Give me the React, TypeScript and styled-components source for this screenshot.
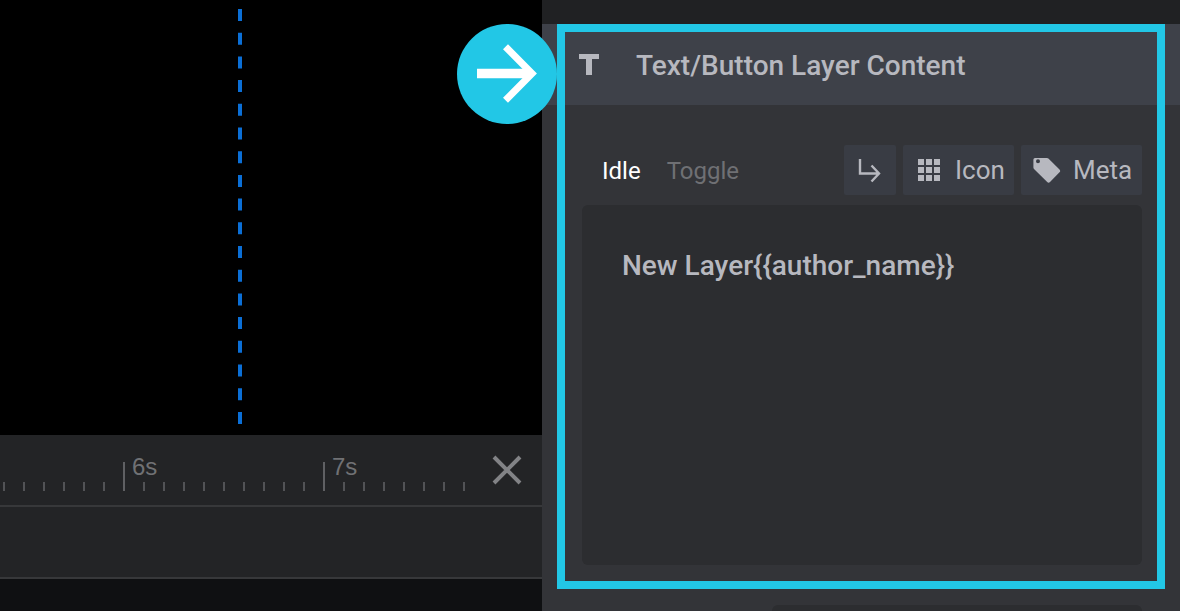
import React from "react";
import styled, { createGlobalStyle } from "styled-components";

const Global = createGlobalStyle`
  html, body { margin: 0; padding: 0; background: #000; }
  body { font-family: Roboto, "Liberation Sans", sans-serif; }
`;

const Page = styled.div`
  position: relative;
  width: 1180px;
  height: 611px;
  overflow: hidden;
  display: grid;
  grid-template-columns: 542px 638px;
`;

const LeftColumn = styled.div`
  display: flex;
  flex-direction: column;
  background: #0f1012;
`;

const Stage = styled.div`
  height: 435px;
  background: #000;
  padding-left: 238px;
  box-sizing: border-box;
`;

const GuideSvg = styled.svg`
  display: block;
  width: 4px;
  height: 435px;
`;

const Ruler = styled.div`
  position: relative;
  height: 70px;
  background: #232426;
  border-bottom: 2px solid #37383a;
`;

const RulerSvg = styled.svg`
  display: block;
  position: absolute;
  left: 0;
  top: 0;
`;

const SecondLabel = styled.span<{ $x: number }>`
  position: absolute;
  left: ${(p) => p.$x}px;
  top: 18px;
  font-family: "Liberation Sans", Arial, sans-serif;
  font-size: 24px;
  line-height: 28px;
  color: #707174;
`;

const CloseIcon = styled.svg`
  position: absolute;
  left: 491px;
  top: 19px;
  width: 32px;
  height: 32px;
`;

const Track = styled.div`
  height: 70px;
  background: #232426;
  border-bottom: 2px solid #37383a;
`;

const RightColumn = styled.div`
  background: #333438;
  display: flex;
  flex-direction: column;
`;

const TopStrip = styled.div`
  height: 24px;
  background: #202123;
`;

const PanelHeader = styled.div`
  height: 81px;
  background: #3e4149;
  display: flex;
  align-items: center;
  padding: 2px 0 0 37px;
  box-sizing: border-box;
  gap: 37px;
`;

const TypeIcon = styled.svg`
  display: block;
  width: 20px;
  height: 22px;
  margin-top: -3px;
`;

const PanelTitle = styled.h2`
  margin: 0;
  font-size: 28px;
  font-weight: 500;
  color: #b7b8bf;
`;

const PanelBody = styled.div`
  flex: 1;
  padding: 40px 38px 0 40px;
  display: flex;
  flex-direction: column;
`;

const ToolRow = styled.div`
  display: flex;
  align-items: center;
  height: 50px;
  gap: 7px;
  margin-bottom: 10px;
`;

const Tabs = styled.div`
  flex: 1;
  display: flex;
  gap: 26px;
  padding: 2px 0 0 20px;
`;

const Tab = styled.span<{ $active?: boolean }>`
  font-size: 24px;
  color: ${(p) => (p.$active ? "#ffffff" : "#6f7074")};
`;

const ToolButton = styled.div<{ $w: number; $pad: number; $gap?: number }>`
  width: ${(p) => p.$w}px;
  height: 50px;
  background: #393c44;
  border-radius: 2px;
  display: flex;
  align-items: center;
  padding-left: ${(p) => p.$pad}px;
  box-sizing: border-box;
  gap: ${(p) => p.$gap ?? 15}px;
  font-size: 26px;
  color: #b7b8bf;
`;

const Editor = styled.div`
  height: 360px;
  background: #2c2d30;
  border-radius: 6px;
  padding: 41px 40px 0;
  box-sizing: border-box;
  font-size: 28px;
  font-weight: 500;
  line-height: 40px;
  color: #b7b8bf;
`;

const NextEditor = styled.div`
  margin: 40px 0 0 190px;
  height: 10px;
  background: #2c2d30;
  border-radius: 6px 6px 0 0;
`;

const Highlight = styled.div`
  position: absolute;
  left: 557px;
  top: 24px;
  width: 608px;
  height: 565px;
  border: 8px solid #22c7e6;
  box-sizing: border-box;
  pointer-events: none;
`;

const ArrowBadge = styled.div`
  position: absolute;
  left: 457px;
  top: 24px;
  width: 100px;
  height: 100px;
  border-radius: 50%;
  background: #22c7e6;
  display: flex;
  align-items: center;
  justify-content: center;
`;

const ticks = Array.from({ length: 24 }, (_, i) => 4 + i * 20);

export default function App() {
  return (
    <>
      <Global />
      <Page>
        <LeftColumn>
          <Stage>
            <GuideSvg viewBox="0 0 4 435">
              <line x1="2" y1="9" x2="2" y2="425" stroke="#0b6fd6" strokeWidth="4.5" strokeDasharray="12 11.7" />
            </GuideSvg>
          </Stage>
          <Ruler>
            <RulerSvg width="542" height="70">
              {ticks.map((x) => (
                <line
                  key={x}
                  x1={x}
                  x2={x}
                  y1={x === 124 || x === 324 ? 27 : 47}
                  y2={56}
                  stroke={x === 124 || x === 324 ? "#5f6063" : "#525356"}
                  strokeWidth="2"
                />
              ))}
            </RulerSvg>
            <SecondLabel $x={132}>6s</SecondLabel>
            <SecondLabel $x={332}>7s</SecondLabel>
            <CloseIcon viewBox="0 0 32 32">
              <path d="M3 3 L29 29 M29 3 L3 29" stroke="#828386" strokeWidth="4" fill="none" />
            </CloseIcon>
          </Ruler>
          <Track />
        </LeftColumn>
        <RightColumn>
          <TopStrip />
          <PanelHeader>
            <TypeIcon viewBox="0 0 20 22" fill="#b7b8bf">
              <path d="M0 1h20v5h-7v16H7V6H0z" />
            </TypeIcon>
            <PanelTitle>Text/Button Layer Content</PanelTitle>
          </PanelHeader>
          <PanelBody>
            <ToolRow>
              <Tabs>
                <Tab $active>Idle</Tab>
                <Tab>Toggle</Tab>
              </Tabs>
              <ToolButton $w={52} $pad={14}>
                <svg width="24" height="26" viewBox="0 0 24 26" fill="none" stroke="#b7b8bf" strokeWidth="2.4">
                  <path d="M2 2 V16.5 H20 M13.5 8.5 L21 16.5 L13.5 24.5" />
                </svg>
              </ToolButton>
              <ToolButton $w={111} $pad={15}>
                <svg width="22" height="22" viewBox="0 0 22 22" fill="#b7b8bf">
                  <path d="M0 0h6v6H0zM8 0h6v6H8zM16 0h6v6h-6zM0 8h6v6H0zM8 8h6v6H8zM16 8h6v6h-6zM0 16h6v6H0zM8 16h6v6H8zM16 16h6v6h-6z" />
                </svg>
                Icon
              </ToolButton>
              <ToolButton $w={121} $pad={12} $gap={12}>
                <svg width="28" height="26" viewBox="0 0 28 26" fill="#b7b8bf">
                  <path
                    fillRule="evenodd"
                    d="M2 1H14a2 2 0 0 1 1.4.6L26.5 12.5a2 2 0 0 1 0 2.8L17 25a2 2 0 0 1-2.8 0L1 12a2 2 0 0 1-.6-1.4V2.5A1.6 1.6 0 0 1 2 1zM5 2.2a2 2 0 1 0 0 4a2 2 0 1 0 0-4z"
                  />
                </svg>
                Meta
              </ToolButton>
            </ToolRow>
            <Editor>{"New Layer{{author_name}}"}</Editor>
            <NextEditor />
          </PanelBody>
        </RightColumn>
        <Highlight />
        <ArrowBadge>
          <svg width="62" height="62" viewBox="0 0 62 62" fill="none" stroke="#ffffff">
            <path d="M1 30.5 H54" strokeWidth="9.5" />
            <path d="M29.5 3.8 L56 30.5 L29.5 57.2" strokeWidth="7" />
          </svg>
        </ArrowBadge>
      </Page>
    </>
  );
}
